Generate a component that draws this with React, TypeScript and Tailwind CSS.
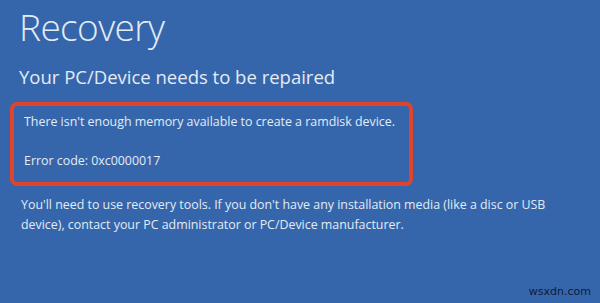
export default function App() {
    return (
        <div className="relative w-[600px] h-[303px] overflow-hidden bg-[#3566ab] text-[#e3ebf5]" style={{ fontFamily: '"Open Sans", "Noto Sans", sans-serif' }}>
            <div className="pl-[19px] pt-[5px]">
                <h1 className="text-[37px] leading-[44px] font-light tracking-[-0.6px]">Recovery</h1>
                <h2 className="mt-[17px] text-[18.5px] leading-[22px] font-normal">Your PC/Device needs to be repaired</h2>
            </div>

            {/* Highlight box */}
            <div className="ml-[10px] mt-[14px] w-[403px] h-[84px] border-[4px] border-[#e2432c] rounded-[7px] pl-[10px] pt-[7px] text-[12.4px]">
                <p className="leading-[18px]">There isn't enough memory available to create a ramdisk device.</p>
                <p className="mt-[21px] leading-[18px]">Error code: 0xc0000017</p>
            </div>

            <p className="ml-[21px] mt-[9px] w-[545px] text-[12.4px] leading-[20px]">
                You'll need to use recovery tools. If you don't have any installation media (like a disc or USB device), contact your PC administrator or PC/Device manufacturer.
            </p>

            <span className="absolute right-[9px] bottom-[3px] text-[11px] text-[#101a33]" style={{ fontFamily: '"DejaVu Sans", sans-serif' }}>
                wsxdn.com
            </span>
        </div>
    )
}
